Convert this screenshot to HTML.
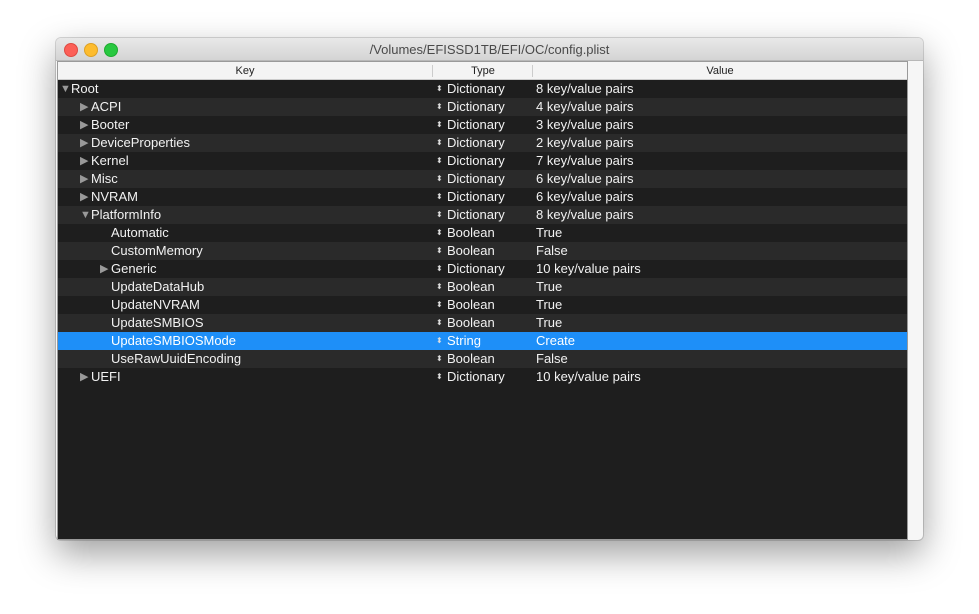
<!DOCTYPE html><html><head><style>
body{margin:0;width:979px;height:614px;background:#fff;position:relative;overflow:hidden;font-family:"Liberation Sans",sans-serif}
.win{position:absolute;left:56px;top:38px;width:867px;height:502px;background:#f6f6f6;border-radius:5px;box-shadow:0 14px 36px rgba(0,0,0,.38),0 0 0 1px rgba(0,0,0,.15)}
.tb{position:absolute;left:0;top:0;width:867px;height:22px;background:linear-gradient(#e8e8e8,#d4d4d4);border-radius:5px 5px 0 0;border-bottom:1px solid #b8b8b8;text-align:center;font-size:13px;line-height:23px;color:#4a4a4a}
.dot{position:absolute;top:5px;width:12px;height:12px;border-radius:50%}
.tab{position:absolute;left:1px;top:23px;width:849px;height:477px;background:#1e1e1e;border:1px solid #9a9a9a}
.hd{position:absolute;left:0;top:0;width:849px;height:17px;background:#f4f4f4;border-bottom:1px solid #ccc;font-size:11px;color:#222;line-height:18px}
.hd span{position:absolute;text-align:center}
.sep{position:absolute;top:3px;width:1px;height:12px;background:#ccc}
.r{position:absolute;left:0;width:849px;height:18px;font-size:13px;color:#f2f2f2;line-height:18px}
.r span{position:absolute;top:0;white-space:nowrap}
.l{background:#2a2a2a}.s{background:#1e8ff8;color:#fff}
.tri{font-size:11px;color:#999}
.ud{font-size:8px;color:#ddd}
</style></head><body>
<div class="win">
<div class="tb">/Volumes/EFISSD1TB/EFI/OC/config.plist
<div class="dot" style="left:8px;background:#fc5f57;border:0.5px solid #de4a42"></div>
<div class="dot" style="left:28px;background:#fdbc2e;border:0.5px solid #dea123"></div>
<div class="dot" style="left:48px;background:#28c840;border:0.5px solid #1eab2f"></div>
</div>
<div class="tab">
<div class="hd"><span style="left:0;width:374px">Key</span><div class="sep" style="left:374px"></div><span style="left:375px;width:100px">Type</span><div class="sep" style="left:474px"></div><span style="left:475px;width:374px">Value</span></div>
<div id="rows"></div>
</div>
</div>
<script>
var d=[[0,1,'▼','Root','Dictionary','8 key/value pairs'],[1,1,'▶','ACPI','Dictionary','4 key/value pairs'],[1,1,'▶','Booter','Dictionary','3 key/value pairs'],[1,1,'▶','DeviceProperties','Dictionary','2 key/value pairs'],[1,1,'▶','Kernel','Dictionary','7 key/value pairs'],[1,1,'▶','Misc','Dictionary','6 key/value pairs'],[1,1,'▶','NVRAM','Dictionary','6 key/value pairs'],[1,1,'▼','PlatformInfo','Dictionary','8 key/value pairs'],[2,0,'','Automatic','Boolean','True'],[2,0,'','CustomMemory','Boolean','False'],[2,1,'▶','Generic','Dictionary','10 key/value pairs'],[2,0,'','UpdateDataHub','Boolean','True'],[2,0,'','UpdateNVRAM','Boolean','True'],[2,0,'','UpdateSMBIOS','Boolean','True'],[2,0,'','UpdateSMBIOSMode','String','Create'],[2,0,'','UseRawUuidEncoding','Boolean','False'],[1,1,'▶','UEFI','Dictionary','10 key/value pairs']];
var h='';d.forEach(function(r,i){var c=i==14?'s':(i%2?'l':'');var x=13+r[0]*20;
h+='<div class="r '+c+'" style="top:'+(18+i*18)+'px">'+(r[2]?'<span class="tri" style="left:'+(x-11)+'px">'+r[2]+'</span>':'')+'<span style="left:'+x+'px">'+r[3]+'</span><span class="ud" style="left:378px">⬍</span><span style="left:389px">'+r[4]+'</span><span style="left:478px">'+r[5]+'</span></div>';});
document.getElementById('rows').innerHTML=h;
</script>
</body></html>
